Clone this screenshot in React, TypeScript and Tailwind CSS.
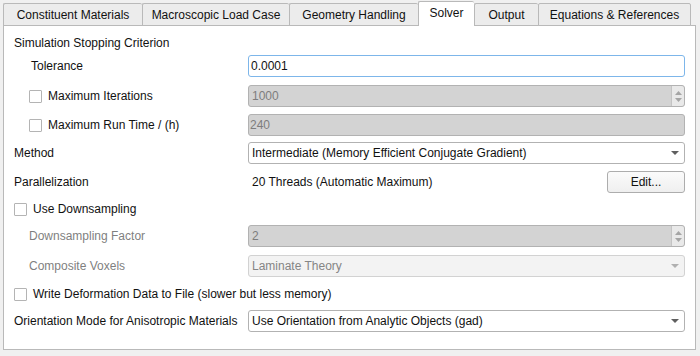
import React from "react";

const tabs = [
  { label: "Constituent Materials", w: "w-[139px]" },
  { label: "Macroscopic Load Case", w: "w-[147px]" },
  { label: "Geometry Handling", w: "w-[129px]" },
  { label: "Solver", w: "w-[56px]", active: true },
  { label: "Output", w: "w-[64px]" },
  { label: "Equations & References", w: "w-[153px]", last: true },
];

const CheckBox: React.FC = () => (
  <span className="inline-block w-[13px] h-[13px] border border-[#b4b4b4] bg-white rounded-[1px] shrink-0" />
);

const Spin: React.FC = () => (
  <div className="flex flex-col items-center justify-center gap-[3px] w-[13px] h-full border-l border-[#c4c4c4] bg-[#e9e9e9] rounded-r-[3px]">
    <svg width="7" height="4" viewBox="0 0 7 4">
      <path d="M0 4 L3.5 0 L7 4 Z" fill="#a5a5a5" />
    </svg>
    <svg width="7" height="4" viewBox="0 0 7 4">
      <path d="M0 0 L3.5 4 L7 0 Z" fill="#a5a5a5" />
    </svg>
  </div>
);

const ComboArrow: React.FC<{ color?: string }> = ({ color = "#5f5f5f" }) => (
  <svg width="8" height="4" viewBox="0 0 8 4" className="mr-[3px]">
    <path d="M0 0 L4 4 L8 0 Z" fill={color} />
  </svg>
);

const DisabledSpinInput: React.FC<{ value: string }> = ({ value }) => (
  <div className="flex-1 h-[22px] flex items-stretch border border-[#b2b2b2] bg-[#d3d3d3] rounded-[3px] text-[#7d7d7d]">
    <div className="flex-1 flex items-center pl-[3px]">{value}</div>
    <Spin />
  </div>
);

const Combo: React.FC<{ value: string; disabled?: boolean }> = ({ value, disabled }) => (
  <div
    className={
      disabled
        ? "flex-1 h-[22px] flex items-center justify-between border border-[#d2d2d2] bg-[#f3f3f3] rounded-[3px] pl-[3px] pr-[2px] text-[#858585]"
        : "flex-1 h-[22px] flex items-center justify-between border border-[#b2b2b2] bg-white rounded-[3px] pl-[3px] pr-[2px] text-[#111]"
    }
  >
    <span>{value}</span>
    <ComboArrow color={disabled ? "#b0b0b0" : "#5f5f5f"} />
  </div>
);

const Row: React.FC<{ className?: string; label: React.ReactNode; children?: React.ReactNode }> = ({
  className,
  label,
  children,
}) => (
  <div className={"flex items-center h-[22px] " + (className ?? "")}>
    <div className="w-[234px] shrink-0 flex items-center whitespace-nowrap">{label}</div>
    {children}
  </div>
);

const App: React.FC = () => {
  return (
    <div
      className="w-[700px] h-[356px] bg-[#f0f0f0] pt-[2px] pl-[3px] text-[12px] leading-[14px] text-[#111] overflow-hidden"
      style={{ fontFamily: '"Liberation Sans", Arial, sans-serif' }}
    >
      {/* tab bar */}
      <div className="relative z-10 flex items-end h-[24px] -mb-px">
        {tabs.map((t) =>
          t.active ? (
            <div
              key={t.label}
              className={`${t.w} h-[25px] flex items-center justify-center border-l border-t border-[#b9b9b9] bg-white rounded-t-[2px] pb-[2px]`}
            >
              {t.label}
            </div>
          ) : (
            <div
              key={t.label}
              className={`${t.w} h-[23px] flex items-center justify-center border-l border-t border-b border-[#b9b9b9] bg-[#ececec] rounded-t-[2px] ${t.last ? "border-r" : ""}`}
            >
              {t.label}
            </div>
          )
        )}
      </div>

      {/* panel */}
      <div className="w-[693px] h-[325px] border border-[#b9b9b9] bg-white pt-[6px] pl-[10px] pr-[10px]">
        <Row label="Simulation Stopping Criterion" />

        <Row className="mt-[1px]" label={<span className="pl-[17px]">Tolerance</span>}>
          <div className="flex-1 h-[22px] flex items-center border border-[#7db6ea] rounded-[3px] pl-[2px] bg-white">
            0.0001
          </div>
        </Row>

        <Row
          className="mt-[8px]"
          label={
            <span className="flex items-center gap-[6px] pl-[15px]">
              <CheckBox />
              Maximum Iterations
            </span>
          }
        >
          <DisabledSpinInput value="1000" />
        </Row>

        <Row
          className="mt-[7px]"
          label={
            <span className="flex items-center gap-[6px] pl-[15px]">
              <CheckBox />
              Maximum Run Time / (h)
            </span>
          }
        >
          <div className="flex-1 h-[22px] flex items-center border border-[#b2b2b2] bg-[#d3d3d3] rounded-[3px] pl-[1px] text-[#7d7d7d]">
            240
          </div>
        </Row>

        <Row className="mt-[6px]" label="Method">
          <Combo value="Intermediate (Memory Efficient Conjugate Gradient)" />
        </Row>

        <Row className="mt-[7px]" label="Parallelization">
          <div className="flex-1 flex items-center justify-between">
            <span className="pl-[4px]">20 Threads (Automatic Maximum)</span>
            <button className="w-[78px] h-[22px] border border-[#adadad] rounded-[3px] bg-gradient-to-b from-[#fbfbfb] to-[#efefef] text-[#111]">
              Edit...
            </button>
          </div>
        </Row>

        <Row
          className="mt-[5px]"
          label={
            <span className="flex items-center gap-[6px]">
              <CheckBox />
              Use Downsampling
            </span>
          }
        />

        <Row className="mt-[5px]" label={<span className="pl-[15px] text-[#7f7f7f]">Downsampling Factor</span>}>
          <DisabledSpinInput value="2" />
        </Row>

        <Row className="mt-[8px]" label={<span className="pl-[15px] text-[#7f7f7f]">Composite Voxels</span>}>
          <Combo value="Laminate Theory" disabled />
        </Row>

        <div className="flex items-center h-[22px] mt-[6px] gap-[6px] whitespace-nowrap">
          <CheckBox />
          Write Deformation Data to File (slower but less memory)
        </div>

        <Row className="mt-[5px]" label="Orientation Mode for Anisotropic Materials">
          <Combo value="Use Orientation from Analytic Objects (gad)" />
        </Row>
      </div>
    </div>
  );
};

export default App;
